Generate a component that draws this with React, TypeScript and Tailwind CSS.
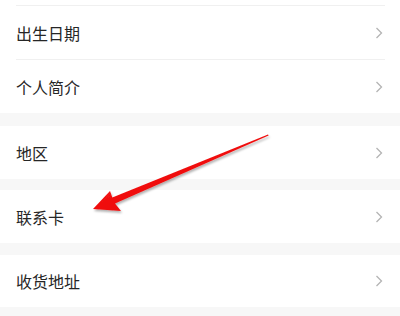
import React from "react";

type Item = { label: string; h: string };

function Chevron() {
	return (
		<svg width="8" height="12" viewBox="0 0 8 12" className="mr-[17px]">
			<polyline points="1.5,1 6.5,6 1.5,11" fill="none" stroke="#b4b4b4" strokeWidth="1.3" />
		</svg>
	);
}

function Row({ label, h, divider }: Item & { divider?: boolean }) {
	return (
		<div className={`bg-white flex items-center justify-between pl-4 ${h} ${divider ? "relative" : ""}`}>
			<span className="text-[16px] text-[#262626] leading-none">{label}</span>
			<Chevron />
			{divider && <div className="absolute left-4 right-[15px] bottom-0 h-px bg-[#f0f0f0]" />}
		</div>
	);
}

function Band({ h }: { h: string }) {
	return <div className={`bg-[#f7f7f7] ${h}`} />;
}

export default function App() {
	return (
		<div
			className="relative w-[400px] h-[316px] overflow-hidden bg-white"
			style={{ fontFamily: '"Noto Sans CJK SC", "Noto Sans", sans-serif' }}
		>
			<div className="h-[5px] bg-white" />
			<div className="ml-4 mr-[15px] h-px bg-[#f0f0f0]" />
			<Row label="出生日期" h="h-[54px]" divider />
			<Row label="个人简介" h="h-[53px]" />
			<Band h="h-[13px]" />
			<Row label="地区" h="h-[53px]" />
			<Band h="h-[11px]" />
			<Row label="联系卡" h="h-[53px]" />
			<Band h="h-[12px]" />
			<Row label="收货地址" h="h-[52px]" />
			<Band h="h-[9px]" />

			{/* red annotation arrow */}
			<svg className="absolute left-0 top-0 pointer-events-none" width="400" height="316" viewBox="0 0 400 316">
				<defs>
					<filter id="sh" x="-10%" y="-10%" width="130%" height="140%">
						<feDropShadow dx="1" dy="2" stdDeviation="1.2" floodColor="#000" floodOpacity="0.3" />
					</filter>
					<linearGradient id="rg" x1="0" y1="0" x2="1" y2="1">
						<stop offset="0" stopColor="#ff2020" />
						<stop offset="1" stopColor="#e00000" />
					</linearGradient>
				</defs>
				<polygon
					points="93,209 110,191 112.3,197.5 268,134.4 268.6,135.6 115,203.5 121,211"
					fill="url(#rg)"
					filter="url(#sh)"
				/>
			</svg>
		</div>
	);
}
